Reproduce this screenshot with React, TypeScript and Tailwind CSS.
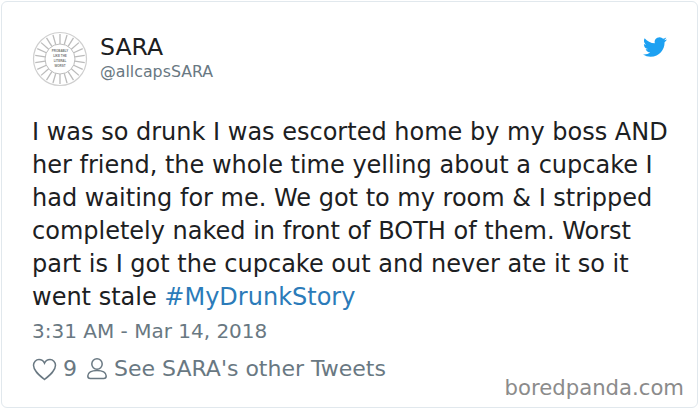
const Avatar = () => (
  <svg width="56" height="56" viewBox="0 0 56 56" className="shrink-0">
    <circle cx="28" cy="28" r="26.5" fill="#fff" stroke="#cfcfcf" strokeWidth="1.2" />
    <circle cx="28" cy="28" r="15" fill="#fff" stroke="#bdbdbd" strokeWidth="1" />
    {Array.from({ length: 22 }).map((_, i) => (
      <line
        key={i}
        x1="28"
        y1="3"
        x2="28"
        y2="13"
        stroke="#bbb"
        strokeWidth="1.3"
        transform={`rotate(${(i * 360) / 22} 28 28)`}
      />
    ))}
    <g fontFamily="'Liberation Sans', sans-serif" fontSize="3" fontWeight="700" fill="#777" textAnchor="middle">
      <text x="28" y="21">PROBABLY</text>
      <text x="28" y="26">LIKE THE</text>
      <text x="28" y="31">LITERAL</text>
      <text x="28" y="36">WORST</text>
    </g>
  </svg>
);

const TwitterBird = () => (
  <svg width="24" height="24" viewBox="0 0 24 24" fill="#1da1f2">
    <path d="M23.95 4.57a10 10 0 0 1-2.82.77 4.96 4.96 0 0 0 2.16-2.72c-.95.55-2 .95-3.12 1.18a4.92 4.92 0 0 0-8.38 4.48C7.69 8.1 4.07 6.13 1.64 3.16a4.82 4.82 0 0 0-.67 2.47c0 1.71.87 3.21 2.19 4.1a4.9 4.9 0 0 1-2.23-.62v.06a4.92 4.92 0 0 0 3.95 4.83 5 5 0 0 1-2.21.08 4.94 4.94 0 0 0 4.6 3.42A9.87 9.87 0 0 1 0 19.54a14 14 0 0 0 7.56 2.21c9.05 0 14-7.5 14-13.98 0-.21 0-.42-.02-.63a9.94 9.94 0 0 0 2.46-2.55z" />
  </svg>
);

export default function App() {
  return (
    <div className="w-[700px] h-[410px] bg-white p-px font-['DejaVu_Sans',sans-serif] overflow-hidden">
      <div className="relative h-[407px] w-[697px] rounded-md border border-[#e1e8ed] pl-[30px] pr-[20px] pt-[29px]">
        {/* Header */}
        <div className="flex items-start">
          <div className="flex items-center gap-[12px]">
            <Avatar />
            <div className="pb-[4px]">
              <p className="text-[23.6px] leading-[30px] text-[#1c2022]">SARA</p>
              <p className="text-[15.8px] leading-[20px] text-[#697882]">@allcapsSARA</p>
            </div>
          </div>
          <div className="ml-auto mt-[4px] mr-[10px]">
            <TwitterBird />
          </div>
        </div>

        {/* Tweet text */}
        <p className="mt-[29px] w-[645px] text-[24px] leading-[33px] text-[#1c2022]">
          I was so drunk I was escorted home by my boss AND her friend, the whole time yelling about a cupcake I had waiting for me. We got to my room &amp; I stripped completely naked in front of BOTH of them. Worst part is I got the cupcake out and never ate it so it went stale{' '}
          <span className="text-[#2b7bb9]">#MyDrunkStory</span>
        </p>

        <p className="mt-[4px] text-[20px] leading-[26px] text-[#697882]">3:31 AM - Mar 14, 2018</p>

        {/* Actions */}
        <div className="mt-[10px] flex items-center text-[#697882] text-[22px] leading-[30px]">
          <svg width="25" height="24" viewBox="0 0 25 24" fill="none" stroke="#697882" strokeWidth="1.5">
            <path d="M12.500 22.500C7.500 18.500 1.500 14 1.500 8.300 1.500 5 4 2.500 7 2.500 9.500 2.500 11.500 4 12.500 6.200 13.500 4 15.500 2.500 18 2.500 21 2.500 23.500 5 23.500 8.300c0 5.700-6 10.200-11 14.200z" />
          </svg>
          <span className="ml-[6px]">9</span>
          <svg className="ml-[8px]" width="24" height="24" viewBox="0 0 24 24" fill="none" stroke="#697882" strokeWidth="1.5">
            <circle cx="12" cy="7" r="5.200" />
            <path d="M2.800 19c0-3.300 3.700-5.500 9.200-5.500s9.200 2.200 9.200 5.500c0 1.500-1 2.500-2.500 2.500H5.300c-1.500 0-2.500-1-2.500-2.500z" />
          </svg>
          <span className="ml-[5px]">See SARA's other Tweets</span>
        </div>

        {/* Watermark */}
        <span className="absolute right-[13px] bottom-[5px] text-[21.2px] leading-[28px] text-[#8b8b8b]">boredpanda.com</span>
      </div>
    </div>
  );
}
